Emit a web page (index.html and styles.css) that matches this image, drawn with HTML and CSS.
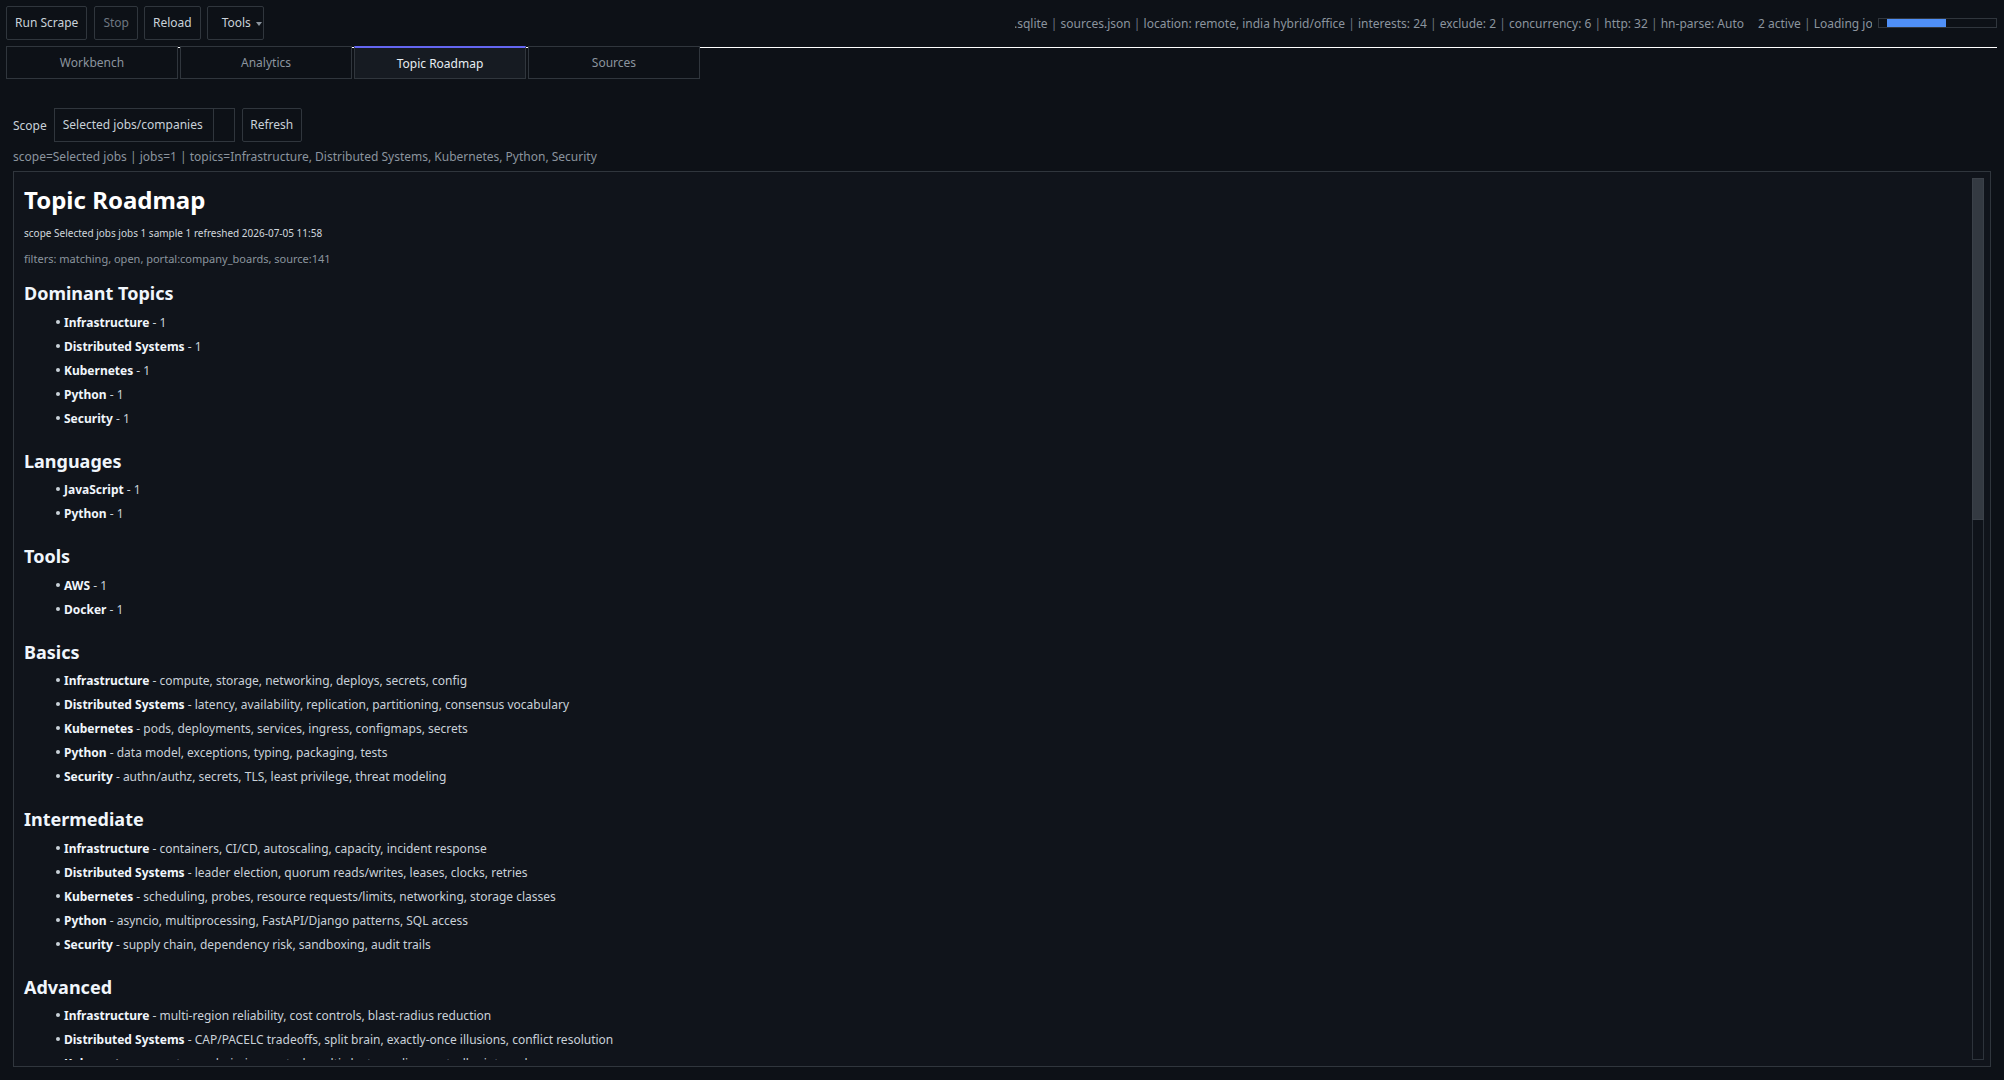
FILE: index.html
```html
<!DOCTYPE html>
<html lang="en">
<head>
<meta charset="utf-8">
<title>Topic Roadmap</title>
<link rel="stylesheet" href="styles.css">
</head>
<body>
<div class="app">
  <header class="topbar">
    <button class="btn">Run Scrape</button>
    <button class="btn btn-disabled">Stop</button>
    <button class="btn">Reload</button>
    <button class="btn btn-tools">Tools <span class="caret"></span></button>
    <div class="spacer"></div>
    <div class="status-main"><span>db: data/jobs.sqlite <i>|</i> sources.json <i>|</i> location: remote, india hybrid/office <i>|</i> interests: 24 <i>|</i> exclude: 2 <i>|</i> concurrency: 6 <i>|</i> http: 32 <i>|</i> hn-parse: Auto</span></div>
    <div class="status-active">2 active <i>|</i> Loading jobs from 141 sources…</div>
    <div class="progress"><div class="progress-fill"></div></div>
  </header>

  <nav class="tabs">
    <button class="tab">Workbench</button>
    <button class="tab">Analytics</button>
    <button class="tab tab-active">Topic Roadmap</button>
    <button class="tab">Sources</button>
  </nav>

  <div class="scope-row">
    <span class="scope-label">Scope</span>
    <div class="select"><span class="select-value">Selected jobs/companies</span><span class="select-arrow"></span></div>
    <button class="btn btn-refresh">Refresh</button>
  </div>
  <div class="meta">scope=Selected jobs | jobs=1 | topics=Infrastructure, Distributed Systems, Kubernetes, Python, Security</div>

  <main class="panel">
    <div class="scroll">
      <h1 class="title">Topic Roadmap</h1>
      <div class="sub">scope Selected jobs jobs 1 sample 1 refreshed 2026-07-05 11:58</div>
      <div class="filters">filters: matching, open, portal:company_boards, source:141</div>

      <section class="sec">
        <h2>Dominant Topics</h2>
        <ul>
          <li><b>Infrastructure</b> - 1</li>
          <li><b>Distributed Systems</b> - 1</li>
          <li><b>Kubernetes</b> - 1</li>
          <li><b>Python</b> - 1</li>
          <li><b>Security</b> - 1</li>
        </ul>
      </section>

      <section class="sec">
        <h2>Languages</h2>
        <ul>
          <li><b>JavaScript</b> - 1</li>
          <li><b>Python</b> - 1</li>
        </ul>
      </section>

      <section class="sec">
        <h2>Tools</h2>
        <ul>
          <li><b>AWS</b> - 1</li>
          <li><b>Docker</b> - 1</li>
        </ul>
      </section>

      <section class="sec">
        <h2>Basics</h2>
        <ul>
          <li><b>Infrastructure</b> - compute, storage, networking, deploys, secrets, config</li>
          <li><b>Distributed Systems</b> - latency, availability, replication, partitioning, consensus vocabulary</li>
          <li><b>Kubernetes</b> - pods, deployments, services, ingress, configmaps, secrets</li>
          <li><b>Python</b> - data model, exceptions, typing, packaging, tests</li>
          <li><b>Security</b> - authn/authz, secrets, TLS, least privilege, threat modeling</li>
        </ul>
      </section>

      <section class="sec">
        <h2>Intermediate</h2>
        <ul>
          <li><b>Infrastructure</b> - containers, CI/CD, autoscaling, capacity, incident response</li>
          <li><b>Distributed Systems</b> - leader election, quorum reads/writes, leases, clocks, retries</li>
          <li><b>Kubernetes</b> - scheduling, probes, resource requests/limits, networking, storage classes</li>
          <li><b>Python</b> - asyncio, multiprocessing, FastAPI/Django patterns, SQL access</li>
          <li><b>Security</b> - supply chain, dependency risk, sandboxing, audit trails</li>
        </ul>
      </section>

      <section class="sec">
        <h2>Advanced</h2>
        <ul>
          <li><b>Infrastructure</b> - multi-region reliability, cost controls, blast-radius reduction</li>
          <li><b>Distributed Systems</b> - CAP/PACELC tradeoffs, split brain, exactly-once illusions, conflict resolution</li>
          <li><b>Kubernetes</b> - operators, admission control, multi-cluster, policy, controller internals</li>
          <li><b>Python</b> - profiling, memory tuning, C extensions, GIL and concurrency internals</li>
          <li><b>Security</b> - threat modeling at scale, incident forensics, zero-trust architecture</li>
        </ul>
      </section>

      <section class="sec">
        <h2>Practice Projects</h2>
        <ul>
          <li><b>Infrastructure</b> - build a small deploy pipeline with staged rollouts and rollback</li>
          <li><b>Distributed Systems</b> - implement a replicated key-value store with leader election</li>
          <li><b>Kubernetes</b> - package a service with Helm, probes, HPA and network policies</li>
          <li><b>Python</b> - write an async scraper with rate limits, retries and a SQLite cache</li>
          <li><b>Security</b> - add secret scanning, SBOM generation and signed builds to CI</li>
        </ul>
      </section>
    </div>
    <div class="scrollbar"><div class="thumb"></div></div>
  </main>
</div>
</body>
</html>
```

FILE: styles.css
```css
* { box-sizing: border-box; }

html, body {
  margin: 0;
  height: 100%;
}

body {
  background: #0d1117;
  color: #c9d1d9;
  font-family: "Noto Sans", "Open Sans", "DejaVu Sans", sans-serif;
  font-size: 12px;
}

.app {
  height: 100vh;
  display: flex;
  flex-direction: column;
}

button {
  font-family: inherit;
}

.btn {
  height: 34px;
  padding: 0 8px;
  background: #0d1117;
  color: #c9d1d9;
  border: 1px solid #30363d;
  border-radius: 2px;
  font-size: 12px;
  line-height: 1;
  white-space: nowrap;
}

.btn-disabled {
  color: #6e7681;
}

.btn-tools {
  width: 57px;
  display: inline-flex;
  align-items: center;
  gap: 5px;
  padding: 0 0 0 14px;
}

.caret {
  width: 0;
  height: 0;
  border-left: 3px solid transparent;
  border-right: 3px solid transparent;
  border-top: 4px solid #8b949e;
  margin-top: 1px;
}

.topbar {
  display: flex;
  align-items: center;
  gap: 6px;
  padding: 6px 7px 0 6px;
}

.btn + .btn {
  margin-left: 0;
}

.topbar .btn:first-child {
  margin-right: 1px;
}

.spacer {
  flex: 1;
}

.status-main {
  width: 729px;
  display: flex;
  justify-content: flex-end;
  overflow: hidden;
  white-space: nowrap;
  color: #8b949e;
  flex-shrink: 0;
}

.status-main span {
  flex-shrink: 0;
}

.status-main i,
.status-active i {
  font-style: normal;
  color: #6e7681;
}

.status-active {
  width: 114px;
  margin-left: 8px;
  overflow: hidden;
  white-space: nowrap;
  color: #8b949e;
  flex-shrink: 0;
}

.progress {
  width: 119px;
  height: 10px;
  border: 1px solid #30363d;
  background: #0d1117;
  padding: 0 0 0 8px;
  flex-shrink: 0;
  display: flex;
  align-items: center;
}

.progress-fill {
  width: 59px;
  height: 8px;
  background: #4f8ff7;
}

.tabs {
  display: flex;
  gap: 2px;
  margin: 6px 7px 0 6px;
  background: linear-gradient(#ffffff, #ffffff) 0 1px / 100% 1px no-repeat;
}

.tab {
  width: 172px;
  height: 33px;
  background: #0d1117;
  border: 1px solid #30363d;
  color: #8b949e;
  font-size: 12px;
  padding: 0;
}

.tab-active {
  background: #161b22;
  color: #e6edf3;
  border-top: 2px solid #6366f1;
}

.scope-row {
  display: flex;
  align-items: center;
  gap: 7px;
  margin-top: 29px;
  padding: 0 13px;
}

.scope-label {
  color: #c9d1d9;
}

.select {
  width: 181px;
  height: 34px;
  display: flex;
  border: 1px solid #30363d;
  background: #0d1117;
}

.select-value {
  flex: 1;
  padding-left: 8px;
  line-height: 32px;
  white-space: nowrap;
  overflow: hidden;
  color: #c9d1d9;
}

.select-arrow {
  width: 21px;
  border-left: 1px solid #30363d;
}

.btn-refresh {
  width: 60px;
  padding: 0;
}

.meta {
  margin-top: 6px;
  padding: 0 13px;
  line-height: 18px;
  color: #8b949e;
}

.panel {
  flex: 1;
  min-height: 0;
  margin: 5px 13px 13px;
  border: 1px solid #30363d;
  background: #10141b;
  padding: 6px;
  display: flex;
}

.scroll {
  flex: 1;
  min-width: 0;
  overflow: hidden;
  padding: 7px 0 0 4px;
}

.scrollbar {
  width: 12px;
  flex-shrink: 0;
  border: 1px solid #2d333b;
  background: #0f131a;
}

.thumb {
  height: 342px;
  margin: -1px -1px 0;
  background: #343a42;
  border: 1px solid #3b4149;
}

.title {
  margin: 0;
  font-size: 24px;
  line-height: 30px;
  font-weight: 700;
  color: #ffffff;
}

.sub {
  margin-top: 10px;
  font-size: 10px;
  line-height: 16px;
  color: #d0d7de;
}

.filters {
  margin-top: 10px;
  font-size: 11px;
  line-height: 16px;
  color: #8b949e;
}

.sec {
  margin-top: 14px;
}

.sec + .sec {
  margin-top: 18px;
}

.sec h2 {
  margin: 0 0 5.5px;
  font-size: 18px;
  line-height: 24px;
  font-weight: 700;
  color: #f0f6fc;
}

.sec ul {
  list-style: none;
  margin: 0;
  padding: 0 0 0 32px;
}

.sec li {
  font-size: 12px;
  line-height: 24px;
  color: #c9d1d9;
}

.sec li::before {
  content: "";
  display: inline-block;
  width: 4px;
  height: 4px;
  border-radius: 50%;
  background: #c9d1d9;
  margin-right: 4px;
  vertical-align: 3px;
}

.sec li b {
  color: #f0f6fc;
  font-weight: 700;
}
```
